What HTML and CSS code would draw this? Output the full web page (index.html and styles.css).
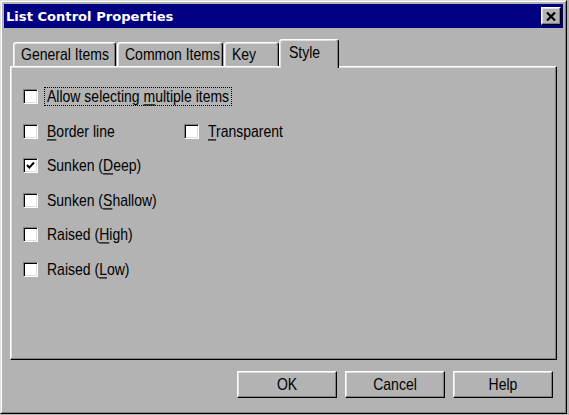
FILE: index.html
```html
<!DOCTYPE html>
<html>
<head>
<meta charset="utf-8">
<link rel="stylesheet" href="styles.css">
</head>
<body>
<div class="dialog">
  <div class="frame">
    <div class="titlebar">
      <span class="title">List Control Properties</span>
      <span class="close">
        <svg width="10" height="9" viewBox="0 0 10 9"><path d="M1 0.5 L9 8.5 M9 0.5 L1 8.5" stroke="#000" stroke-width="2.2" fill="none"/></svg>
      </span>
    </div>
    <div class="body">
      <div class="tabs">
        <div class="tab t-general"><span class="txt">General Items</span></div>
        <div class="tab t-common"><span class="txt">Common Items</span></div>
        <div class="tab t-key"><span class="txt">Key</span></div>
        <div class="tab t-style active"><span class="txt">Style</span></div>
      </div>
      <div class="panel">
        <div class="rows">
          <div class="row">
            <label class="check"><span class="box"></span><span class="label focus"><span class="txt">Allow selecting <u>m</u>ultiple items</span></span></label>
          </div>
          <div class="row two">
            <label class="check"><span class="box"></span><span class="label"><span class="txt"><u>B</u>order line</span></span></label>
            <label class="check"><span class="box"></span><span class="label"><span class="txt"><u>T</u>ransparent</span></span></label>
          </div>
          <div class="row">
            <label class="check"><span class="box checked"><svg width="9" height="9" viewBox="0 0 9 9"><path d="M1 4 L3.3 6.6 L8 1.5" stroke="#000" stroke-width="2" fill="none"/></svg></span><span class="label"><span class="txt">Sunken (<u>D</u>eep)</span></span></label>
          </div>
          <div class="row">
            <label class="check"><span class="box"></span><span class="label"><span class="txt">Sunken (<u>S</u>hallow)</span></span></label>
          </div>
          <div class="row">
            <label class="check"><span class="box"></span><span class="label"><span class="txt">Raised (<u>H</u>igh)</span></span></label>
          </div>
          <div class="row">
            <label class="check"><span class="box"></span><span class="label"><span class="txt">Raised (<u>L</u>ow)</span></span></label>
          </div>
        </div>
      </div>
      <div class="buttons">
        <div class="btn"><span class="txt">OK</span></div>
        <div class="btn"><span class="txt">Cancel</span></div>
        <div class="btn"><span class="txt">Help</span></div>
      </div>
    </div>
  </div>
</div>
</body>
</html>
```
FILE: styles.css
```css
html, body {
  margin: 0;
  padding: 0;
  background: #b3b3b3;
}
body {
  width: 569px;
  height: 415px;
  overflow: hidden;
  font-family: "Liberation Sans", Arial, sans-serif;
  font-size: 14px;
  color: #000;
}
.txt {
  display: inline-block;
  transform: scaleY(1.2);
  white-space: nowrap;
}
.dialog {
  width: 567px;
  height: 414px;
  box-sizing: border-box;
  border: 1px solid;
  border-color: #dfdfdf #000 #000 #dfdfdf;
}
.frame {
  height: 100%;
  box-sizing: border-box;
  border: 1px solid;
  border-color: #fff #808080 #808080 #fff;
  padding: 2px;
  display: flex;
  flex-direction: column;
}
.titlebar {
  height: 24px;
  background: #000080;
  display: flex;
  align-items: center;
  justify-content: space-between;
  padding: 0 2px 0 2px;
  flex: none;
}
.title {
  font-family: "DejaVu Sans", sans-serif;
  font-weight: bold;
  font-size: 13.1px;
  color: #fff;
}
.close {
  width: 20px;
  height: 18px;
  box-sizing: border-box;
  background: #b3b3b3;
  border: 1px solid;
  border-color: #fff #000 #000 #fff;
  box-shadow: inset -1px -1px #808080, inset 1px 1px #dfdfdf;
  display: flex;
  align-items: center;
  justify-content: center;
}
.body {
  flex: 1;
  padding: 11px 6px 0 6px;
  display: flex;
  flex-direction: column;
}
.tabs {
  display: flex;
  align-items: flex-end;
  padding-left: 3px;
  gap: 1px;
  height: 27px;
}
.tab {
  height: 24px;
  box-sizing: border-box;
  border: 1px solid;
  border-bottom: none;
  border-color: #fff #000 transparent #fff;
  border-radius: 3px 3px 0 0;
  box-shadow: inset -1px 0 #808080, inset 1px 1px #dfdfdf;
  padding-left: 7px;
  line-height: 22px;
}
.t-general { width: 103px; }
.t-common { width: 106px; }
.t-key { width: 55px; }
.t-style { width: 60px; }
.tab.active {
  height: 29px;
  margin-bottom: -2px;
  margin-left: -1px;
  padding-left: 9px;
  position: relative;
  z-index: 1;
  background: #b3b3b3;
  line-height: 24px;
}
.panel {
  height: 294px;
  box-sizing: border-box;
  border: 1px solid;
  border-color: #fff #000 #000 #fff;
  box-shadow: inset -1px -1px #808080, inset 1px 1px #dfdfdf;
  padding: 22px 12px 0 12px;
}
.rows {
  display: flex;
  flex-direction: column;
  gap: 19.6px;
}
.row {
  height: 15px;
  display: flex;
  align-items: center;
}
.row.two .check:first-child {
  width: 161px;
}
.check {
  display: flex;
  align-items: center;
  gap: 9px;
}
.box {
  width: 15px;
  height: 15px;
  box-sizing: border-box;
  background: #fff;
  border: 1px solid;
  border-color: #808080 #fff #fff #808080;
  box-shadow: inset 1px 1px #000, inset -1px -1px #dfdfdf;
  display: flex;
  align-items: center;
  justify-content: center;
  flex: none;
}
.label {
  line-height: 17px;
  height: 17px;
}
.label u {
  text-decoration-thickness: 1px;
  text-underline-offset: 2px;
}
.label.focus {
  outline: 1px dotted #000;
  outline-offset: 0;
  padding: 0 2px;
  margin-left: -2px;
}
.buttons {
  display: flex;
  justify-content: flex-end;
  gap: 8px;
  padding: 11px 4px 0 0;
}
.btn {
  width: 100px;
  height: 27px;
  box-sizing: border-box;
  border: 1px solid;
  border-color: #fff #000 #000 #fff;
  box-shadow: inset -1px -1px #808080, inset 1px 1px #dfdfdf;
  text-align: center;
  line-height: 25px;
}
```
